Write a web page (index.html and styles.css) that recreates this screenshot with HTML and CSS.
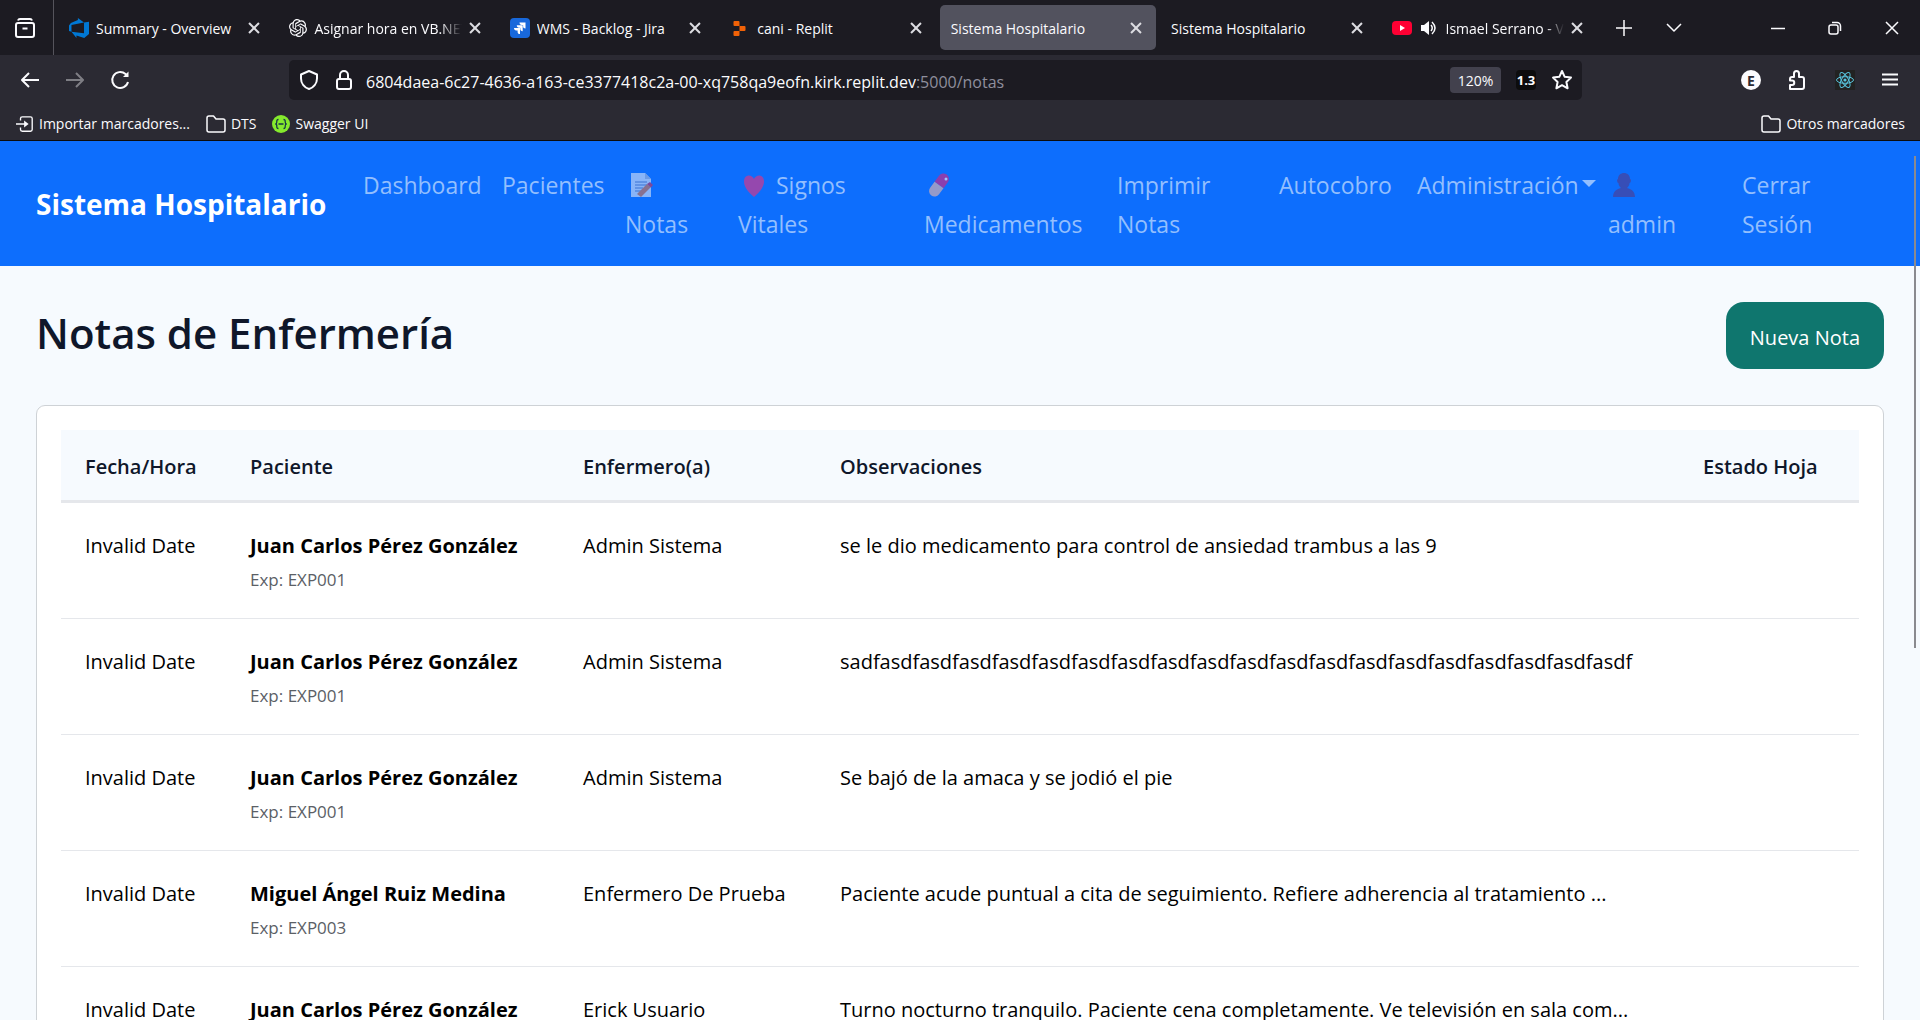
FILE: index.html
```html
<!DOCTYPE html>
<html lang="es">
<head>
<meta charset="utf-8">
<title>Sistema Hospitalario</title>
<link rel="stylesheet" href="styles.css">
</head>
<body>
<header class="chrome">
  <div class="tabbar">
    <button class="iconbtn view" aria-label="Ver pestañas recientes"><svg width="22" height="22" viewBox="0 0 22 22" class="ln"><rect x="2" y="6" width="18" height="14" rx="2"/><path d="M4 3.500q.5-1.500 2-1.500h10q1.500 0 2 1.500M8.500 11.500h5"/></svg></button>
    <div class="tabs">
      <div class="tab"><svg width="20" height="20" viewBox="0 0 24 24"><path fill="#0078d4" d="M0 8.877L2.247 5.910l8.405-3.416V.022l7.370 5.393L2.966 8.338v8.225L0 15.707zm24-4.450v14.651l-5.753 4.900-9.303-3.057v3.056l-5.978-7.416 15.057 1.798V5.415z"/></svg><span>Summary - Overview</span><button class="x" aria-label="Cerrar pestaña"></button></div>
      <div class="tab"><svg width="18" height="18" viewBox="0 0 24 24"><path fill="#fbfbfe" d="M22.2819 9.8211a5.9847 5.9847 0 0 0-.5157-4.9108 6.0462 6.0462 0 0 0-6.5098-2.9A6.0651 6.0651 0 0 0 4.9807 4.1818a5.9847 5.9847 0 0 0-3.9977 2.9 6.0462 6.0462 0 0 0 .7427 7.0966 5.98 5.98 0 0 0 .511 4.9107 6.051 6.051 0 0 0 6.5146 2.9001A5.9847 5.9847 0 0 0 13.2599 24a6.0557 6.0557 0 0 0 5.7718-4.2058 5.9894 5.9894 0 0 0 3.9977-2.9001 6.0557 6.0557 0 0 0-.7475-7.073zm-9.022 12.6081a4.4755 4.4755 0 0 1-2.8764-1.0408l.1419-.0804 4.7783-2.7582a.7948.7948 0 0 0 .3927-.6813v-6.7369l2.02 1.1686a.071.071 0 0 1 .038.052v5.5826a4.504 4.504 0 0 1-4.4945 4.4944zm-9.6607-4.1254a4.4708 4.4708 0 0 1-.5346-3.0137l.142.0852 4.783 2.7582a.7712.7712 0 0 0 .7806 0l5.8428-3.3685v2.3324a.0804.0804 0 0 1-.0332.0615L9.74 19.9502a4.4992 4.4992 0 0 1-6.1408-1.6464zM2.3408 7.8956a4.485 4.485 0 0 1 2.3655-1.9728V11.6a.7664.7664 0 0 0 .3879.6765l5.8144 3.3543-2.0201 1.1685a.0757.0757 0 0 1-.071 0l-4.8303-2.7865A4.504 4.504 0 0 1 2.3408 7.872zm16.5963 3.8558L13.1038 8.364 15.1192 7.2a.0757.0757 0 0 1 .071 0l4.8303 2.7913a4.4944 4.4944 0 0 1-.6765 8.1042v-5.6772a.79.79 0 0 0-.407-.667zm2.0107-3.0231l-.142-.0852-4.7735-2.7818a.7759.7759 0 0 0-.7854 0L9.409 9.2297V6.8974a.0662.0662 0 0 1 .0284-.0615l4.8303-2.7866a4.4992 4.4992 0 0 1 6.6802 4.66zM8.3065 12.863l-2.02-1.1638a.0804.0804 0 0 1-.038-.0567V6.0742a4.4992 4.4992 0 0 1 7.3757-3.4537l-.142.0805L8.704 5.459a.7948.7948 0 0 0-.3927.6813zm1.0976-2.3654l2.602-1.4998 2.6069 1.4998v2.9994l-2.5974 1.4997-2.6067-1.4997Z"/></svg><span class="fade">Asignar hora en VB.NET</span><button class="x" aria-label="Cerrar pestaña"></button></div>
      <div class="tab"><svg width="20" height="20" viewBox="0 0 20 20"><rect width="20" height="20" rx="4" fill="#1868db"/><path fill="#fff" d="M9.500 4.500h6v6c-1.600 0-2.400-.8-2.400-2.200V7h-1.300c-1.500 0-2.300-1-2.300-2.500zM6.800 7.200h5.900v6c-1.600 0-2.400-.8-2.400-2.200V9.700H9C7.600 9.700 6.800 8.700 6.800 7.200zM4 9.900h6v6.100c-1.600 0-2.400-.8-2.400-2.300v-1.300H6.300C4.800 12.400 4 11.400 4 9.900z"/></svg><span>WMS - Backlog - Jira</span><button class="x" aria-label="Cerrar pestaña"></button></div>
      <div class="tab"><svg width="20" height="20" viewBox="0 0 20 20"><path fill="#f26207" d="M3.500 4a1 1 0 0 1 1-1h4a1 1 0 0 1 1 1v4h-5a1 1 0 0 1-1-1zM9.500 8h5a1 1 0 0 1 1 1v3a1 1 0 0 1-1 1h-5zM3.500 14a1 1 0 0 1 1-1h5v4a1 1 0 0 1-1 1h-4a1 1 0 0 1-1-1z"/></svg><span>cani - Replit</span><button class="x" aria-label="Cerrar pestaña"></button></div>
      <div class="tab active"><span>Sistema Hospitalario</span><button class="x" aria-label="Cerrar pestaña"></button></div>
      <div class="tab"><span>Sistema Hospitalario</span><button class="x" aria-label="Cerrar pestaña"></button></div>
      <div class="tab"><svg width="20" height="20" viewBox="0 0 20 20"><rect y="3" width="20" height="14" rx="4" fill="#f03"/><path fill="#fff" d="M8 7l5 3-5 3z"/></svg><svg width="20" height="16" viewBox="0 0 20 16"><path fill="#fbfbfe" d="M2 5h3l5-4v14l-5-4H2z"/><path class="ln" d="M12 5q2.500 3 0 6M13 2q6 6 0 12"/></svg><span class="fade">Ismael Serrano - Vértigo</span><button class="x" aria-label="Cerrar pestaña"></button></div>
    </div>
    <button class="iconbtn" aria-label="Nueva pestaña"><svg width="16" height="16" viewBox="0 0 16 16" class="ln"><path d="M8 0v16M0 8h16"/></svg></button>
    <button class="iconbtn" aria-label="Listar pestañas"><svg width="16" height="16" viewBox="0 0 16 16" class="ln"><path d="M1 4l7 7 7-7"/></svg></button>
    <div class="win">
      <button aria-label="Minimizar"><svg width="14" height="14" viewBox="0 0 14 14" class="ln"><path d="M0 7.500h14"/></svg></button>
      <button aria-label="Restaurar"><svg width="14" height="14" viewBox="0 0 14 14" class="ln"><rect x="1" y="4" width="9" height="9" rx="2"/><path d="M4 1.500h5a3.500 3.500 0 0 1 3.500 3.500v5"/></svg></button>
      <button aria-label="Cerrar"><svg width="14" height="14" viewBox="0 0 14 14" class="ln"><path d="M1 1l12 12M13 1L1 13"/></svg></button>
    </div>
  </div>
  <div class="toolbar">
    <div class="navbtns">
      <button aria-label="Atrás"><svg width="20" height="20" viewBox="0 0 20 20" class="ln"><path d="M19 10H2M9 3l-7 7 7 7"/></svg></button>
      <button aria-label="Adelante" disabled><svg width="20" height="20" viewBox="0 0 20 20" class="ln"><path d="M1 10h17M11 3l7 7-7 7"/></svg></button>
      <button aria-label="Recargar"><svg width="20" height="20" viewBox="0 0 20 20" class="ln"><path d="M18 12a8 8 0 1 1-2.500-8l2 2"/><path d="M18.500 1.500v5.500h-5.500z" fill="#fbfbfe" stroke="none"/></svg></button>
    </div>
    <div class="urlbar">
      <svg width="20" height="20" viewBox="0 0 20 20" class="ln"><path d="M10 1l8 3.500v4c0 5-3.500 9-8 10.500-4.500-1.500-8-5.500-8-10.500v-4z"/></svg>
      <svg width="20" height="20" viewBox="0 0 20 20" class="ln"><rect x="3" y="9" width="14" height="10" rx="2"/><path d="M6 9V5a4 4 0 0 1 8 0v4"/></svg>
      <a class="url" href="#">6804daea-6c27-4636-a163-ce3377418c2a-00-xq758qa9eofn.kirk.replit.dev<span>:5000/notas</span></a>
      <button class="zoom">120%</button>
      <button class="ver">1.3</button>
      <button aria-label="Añadir marcador"><svg width="22" height="22" viewBox="0 0 22 22" class="ln"><path d="M11 2l2.700 5.800 6.300.8-4.600 4.400 1.200 6.300L11 16.200l-5.600 3.100L6.600 13 2 8.600l6.300-.8z"/></svg></button>
    </div>
    <div class="exts">
      <button class="acct">E</button>
      <button aria-label="Extensiones"><svg width="20" height="20" viewBox="0 0 20 20" class="ln"><path d="M2 19h12a2 2 0 0 0 2-2V9a2 2 0 0 0-2-2h-3V3.500a2.500 2.500 0 0 0-5 0V7H4a2 2 0 0 0-2 2v1.500h2a2 2 0 0 1 0 4.500H2z"/></svg></button>
      <button aria-label="React"><svg width="20" height="20" viewBox="0 0 20 20"><rect width="20" height="20" fill="#222"/><g fill="none" stroke="#58c4dc"><ellipse cx="10" cy="10" rx="8.500" ry="3.300"/><ellipse cx="10" cy="10" rx="8.500" ry="3.300" transform="rotate(60 10 10)"/><ellipse cx="10" cy="10" rx="8.500" ry="3.300" transform="rotate(120 10 10)"/></g><circle cx="10" cy="10" r="1.600" fill="#58c4dc"/></svg></button>
      <button aria-label="Menú"><svg width="16" height="16" viewBox="0 0 16 16" class="ln"><path d="M0 2.500h16M0 7.500h16M0 12.500h16"/></svg></button>
    </div>
  </div>
  <div class="bookmarks">
    <a href="#"><svg width="18" height="18" viewBox="0 0 20 20" class="ln"><path d="M5 6V4a2 2 0 0 1 2-2h9a2 2 0 0 1 2 2v12a2 2 0 0 1-2 2H7a2 2 0 0 1-2-2v-2M0 10h11"/><path d="M9 6l5 4-5 4z" fill="#fbfbfe" stroke="none"/></svg>Importar marcadores...</a>
    <a href="#"><svg width="20" height="18" viewBox="0 0 20 18" class="ln"><path d="M1 3a2 2 0 0 1 2-2h4.500l2.500 3h7a2 2 0 0 1 2 2v9a2 2 0 0 1-2 2H3a2 2 0 0 1-2-2z"/></svg>DTS</a>
    <a href="#"><svg width="18" height="18" viewBox="0 0 18 18"><circle cx="9" cy="9" r="9" fill="#85ea2d"/><path d="M6.500 4.500Q4.500 4.500 4.800 7q0 2-1.500 2 1.500 0 1.500 2-.3 2.500 1.700 2.500M11.500 4.500q2 0 1.700 2.500 0 2 1.500 2-1.500 0-1.500 2 .3 2.500-1.700 2.500M6.500 9h5" fill="none" stroke="#173647" stroke-width="1.300"/></svg>Swagger UI</a>
    <a href="#" class="last"><svg width="20" height="18" viewBox="0 0 20 18" class="ln"><path d="M1 3a2 2 0 0 1 2-2h4.500l2.500 3h7a2 2 0 0 1 2 2v9a2 2 0 0 1-2 2H3a2 2 0 0 1-2-2z"/></svg>Otros marcadores</a>
  </div>
</header>
<div class="page">
  <nav class="navbar">
    <a class="brand" href="#">Sistema Hospitalario</a>
    <ul>
      <li><a href="#">Dashboard</a></li>
      <li><a href="#">Pacientes</a></li>
      <li><a href="#"><svg class="emo" width="32" height="24" viewBox="0 0 32 24"><path fill="#dbe4f5" d="M6 0h14l6 6v18H6z"/><path fill="#a9b8d8" d="M20 0v6h6z"/><path d="M10 9h12M10 12h12M10 15h8M10 18h6" stroke="#5876b8" stroke-width="1"/><path d="M12 21l10-10 4 3-10 10z" fill="#d9744b"/><path d="M22 11l3-2 3 3-2 2.500z" fill="#c42f5b"/></svg><br>Notas</a></li>
      <li><a href="#"><svg class="emo" width="32" height="24" viewBox="0 0 32 24"><path fill="#f0307a" d="M16 24C9 18 6 13 6 8.500c0-7 7.500-8 10-2.500 2.500-5.500 10-4.500 10 2.500 0 4.500-3 9.500-10 15.500z"/></svg> Signos Vitales</a></li>
      <li><a href="#"><svg class="emo" width="32" height="24" viewBox="0 0 32 24"><g transform="rotate(36 15 12)"><path d="M9.500 12V4.500a5.500 5.500 0 0 1 11 0V12z" fill="#e0207a"/><path d="M9.500 12v7.500a5.500 5.500 0 0 0 11 0V12z" fill="#f0b8a8"/></g><circle cx="22" cy="6" r="1.500" fill="#fff"/></svg><br>Medicamentos</a></li>
      <li><a href="#">Imprimir Notas</a></li>
      <li><a href="#">Autocobro</a></li>
      <li><a href="#" class="drop">Administración</a></li>
      <li><a href="#"><svg class="emo" width="32" height="24" viewBox="0 0 32 24"><path fill="#533a8a" d="M10 6c0-8 12-8 12 0 1.500 0 1 4-.4 4-.4 3-1.600 4-2.600 5 5 1 8 4 8 9H5c0-5 3-8 8-9-1-1-2.200-2-2.600-5-1.400 0-1.900-4-.4-4z"/></svg><br>admin</a></li>
      <li><a href="#">Cerrar Sesión</a></li>
    </ul>
  </nav>
  <main>
    <div class="head"><h1>Notas de Enfermería</h1><button class="new">Nueva Nota</button></div>
    <section class="card">
      <table>
        <colgroup><col class="c1"><col class="c2"><col class="c3"><col class="c4"><col class="c5"></colgroup>
        <thead><tr><th>Fecha/Hora</th><th>Paciente</th><th>Enfermero(a)</th><th>Observaciones</th><th>Estado Hoja</th></tr></thead>
        <tbody>
          <tr><td>Invalid Date</td><td><strong>Juan Carlos Pérez González</strong><small>Exp: EXP001</small></td><td>Admin Sistema</td><td>se le dio medicamento para control de ansiedad trambus a las 9</td><td></td></tr>
          <tr><td>Invalid Date</td><td><strong>Juan Carlos Pérez González</strong><small>Exp: EXP001</small></td><td>Admin Sistema</td><td>sadfasdfasdfasdfasdfasdfasdfasdfasdfasdfasdfasdfasdfasdfasdfasdfasdfasdfasdfasdf</td><td></td></tr>
          <tr><td>Invalid Date</td><td><strong>Juan Carlos Pérez González</strong><small>Exp: EXP001</small></td><td>Admin Sistema</td><td>Se bajó de la amaca y se jodió el pie</td><td></td></tr>
          <tr><td>Invalid Date</td><td><strong>Miguel Ángel Ruiz Medina</strong><small>Exp: EXP003</small></td><td>Enfermero De Prueba</td><td>Paciente acude puntual a cita de seguimiento. Refiere adherencia al tratamiento ...</td><td></td></tr>
          <tr><td>Invalid Date</td><td><strong>Juan Carlos Pérez González</strong><small>Exp: EXP001</small></td><td>Erick Usuario</td><td>Turno nocturno tranquilo. Paciente cena completamente. Ve televisión en sala com...</td><td></td></tr>
        </tbody>
      </table>
    </section>
  </main>
  <div class="thumb"></div>
</div>
</body>
</html>
```
FILE: styles.css
```css
* { box-sizing: border-box; }
html, body { height: 100%; }
body {
  margin: 0;
  display: flex;
  flex-direction: column;
  overflow: hidden;
  font-family: "Open Sans", "Noto Sans", sans-serif;
  background: #f6fafe;
}
button { font: inherit; color: inherit; background: none; border: 0; padding: 0; display: flex; align-items: center; justify-content: center; }
a { color: inherit; text-decoration: none; }
svg { flex: none; }
.ln { fill: none; stroke: #fbfbfe; stroke-width: 2; stroke-linejoin: round; }

/* Browser chrome */
.chrome { flex: none; background: #2b2a33; color: #fbfbfe; font-size: 15px; border-bottom: 1px solid #0c0c0d; }
.tabbar { display: flex; align-items: center; height: 55px; background: #1c1b22; }
.tabbar .ln { stroke-width: 1.5; }
.tabbar .view { width: 54px; height: 55px; border-right: 1px solid #55545c; padding-right: 4px; }
.tabbar .view .ln { stroke-width: 2; }
.tabs { flex: 0 1 1543px; display: flex; margin-left: 2px; min-width: 0; }
.tab { flex: 1 1 0; min-width: 0; display: flex; align-items: center; gap: 7px; height: 45px; margin: 0 2px; padding: 0 11px; border-radius: 5px; font-size: 14px; }
.tab.active { background: #52525e; }
.tab span { flex: 1; min-width: 0; padding-top: 2px; overflow: hidden; white-space: nowrap; }
.tab .fade { mask-image: linear-gradient(to right, #000 85%, transparent); }
.x { position: relative; width: 12px; height: 12px; margin-right: 3px; flex: none; }
.x::before, .x::after { content: ""; position: absolute; left: -1px; top: 5px; width: 14px; height: 2px; background: #dddde2; transform: rotate(45deg); }
.x::after { transform: rotate(-45deg); }
.tabbar .iconbtn:not(.view) { width: 50px; height: 45px; }
.win { margin-left: auto; display: flex; }
.win button { width: 57px; height: 45px; }
.toolbar { display: flex; align-items: center; height: 50px; }
.navbtns { display: flex; gap: 25px; padding-left: 20px; width: 289px; }
.navbtns button:disabled { opacity: .4; }
.urlbar { flex: 1; display: flex; align-items: center; height: 40px; gap: 15px; padding: 0 9px 0 10px; border-radius: 5px; background: #1c1b22; min-width: 0; }
.url { flex: 1; min-width: 0; padding-top: 3px; margin-left: -3px; font-size: 16px; white-space: nowrap; }
.url span { color: #8f8f9d; }
.zoom { width: 51px; height: 26px; border-radius: 4px; background: #42414d; font-size: 14px; padding-top: 1px; }
.ver { width: 20px; height: 20px; border-radius: 4px; background: #0c0c0d; font-size: 13px; font-weight: 700; }
.exts { display: flex; align-items: center; justify-content: flex-end; gap: 27px; width: 338px; padding-right: 22px; }
.acct { width: 20px; height: 20px; border-radius: 50%; background: #fbfbfe; color: #2b2a33; font-size: 14px; font-weight: 700; }
.bookmarks { display: flex; align-items: center; height: 35px; gap: 16px; padding: 2px 15px 0 16px; font-size: 14px; }
.bookmarks a { display: flex; align-items: center; gap: 5px; }
.bookmarks .ln { stroke-width: 1.5; }
.bookmarks .last { margin-left: auto; }

/* Application */
.page { flex: 1; min-height: 0; position: relative; overflow: hidden; }
.navbar { display: flex; align-items: center; min-height: 125px; padding: 0 37px 0 36px; background: #0d6efd; }
.brand { flex: none; width: 316px; color: #fff; font-size: 28px; font-weight: 700; white-space: nowrap; }
.navbar ul { flex: 1; display: grid; grid-template-columns: 139fr 123fr 113fr 186fr 193fr 162fr 138fr 191fr 134fr 152fr; margin: 0; padding: 2px 0 0; list-style: none; }
.navbar li { padding: 0 12px 0 11px; font-size: 23px; line-height: 39px; color: #93bffe; min-width: 0; }
.emo { vertical-align: -3px; opacity: .6; }
.drop { white-space: nowrap; }
.drop::after { content: ""; display: inline-block; margin-left: 3px; vertical-align: 7px; border: 7px solid transparent; border-top-color: currentColor; border-bottom: 0; }
main { padding: 36px; }
.head { display: flex; justify-content: space-between; align-items: flex-start; margin-bottom: 36px; }
h1 { margin: 0; font-size: 42px; line-height: 62px; font-weight: 600; color: #0f172a; }
.new { height: 67px; padding: 3px 24px 0; border-radius: 18px; background: #0f766e; color: #fff; font-size: 20px; }
.card { background: #fff; border: 1px solid #ced2d6; border-radius: 9px; padding: 24px; }
table { width: 100%; border-collapse: separate; border-spacing: 0; table-layout: fixed; font-size: 20px; line-height: 35px; }
.c1 { width: 165px; } .c2 { width: 333px; } .c3 { width: 257px; } .c5 { width: 180px; }
th { height: 73px; padding: 2px 0 0 24px; text-align: left; font-weight: 600; color: #0f172a; background: #f6fafe; border-bottom: 3px solid #e5e7eb; }
td { padding: 25px 0 22px 24px; vertical-align: top; border-bottom: 1px solid #e5e7eb; white-space: nowrap; color: #000; }
strong, small { display: block; }
strong { font-weight: 700; }
small { font-size: 17px; line-height: 33px; color: #5b6066; }
.thumb { position: absolute; top: 15px; right: 4px; width: 2px; height: 492px; background: #8a8a8f; }
```
